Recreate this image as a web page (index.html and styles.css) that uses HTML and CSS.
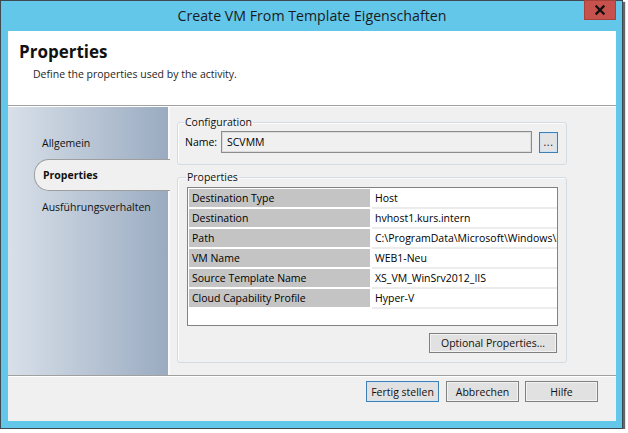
FILE: index.html
```html
<!DOCTYPE html>
<html lang="de">
<head>
<meta charset="utf-8">
<title>Create VM From Template Eigenschaften</title>
<link rel="stylesheet" href="styles.css">
</head>
<body>
<div class="window">
  <div class="titlebar">
    <span class="tb-spacer"></span>
    <div class="title">Create VM From Template Eigenschaften</div>
    <div class="close" aria-label="Schließen">
      <svg width="32" height="20" viewBox="0 0 32 20"><path d="M12.5 6.5 L19.5 13.5 M19.5 6.5 L12.5 13.5" stroke="#111" stroke-width="2.3" stroke-linecap="square"/></svg>
    </div>
  </div>
  <div class="client">
    <header class="header">
      <h1 class="h-title">Properties</h1>
      <p class="h-desc">Define the properties used by the activity.</p>
    </header>
    <div class="main">
      <nav class="sidebar">
        <div class="nav-item">Allgemein</div>
        <div class="nav-item active">Properties</div>
        <div class="nav-item">Ausführungsverhalten</div>
      </nav>
      <div class="content">
        <fieldset class="group group-config">
          <legend>Configuration</legend>
          <div class="name-row">
            <span class="name-label">Name:</span>
            <div class="textbox">SCVMM</div>
            <button class="btn btn-dots">...</button>
          </div>
        </fieldset>
        <fieldset class="group group-props">
          <legend>Properties</legend>
          <div class="pgrid">
            <div class="prow"><div class="pname">Destination Type</div><div class="pval">Host</div></div>
            <div class="prow"><div class="pname">Destination</div><div class="pval">hvhost1.kurs.intern</div></div>
            <div class="prow"><div class="pname">Path</div><div class="pval">C:\ProgramData\Microsoft\Windows\Hyper-V</div></div>
            <div class="prow"><div class="pname">VM Name</div><div class="pval">WEB1-Neu</div></div>
            <div class="prow"><div class="pname">Source Template Name</div><div class="pval">XS_VM_WinSrv2012_IIS</div></div>
            <div class="prow"><div class="pname">Cloud Capability Profile</div><div class="pval">Hyper-V</div></div>
          </div>
          <div class="opt-row"><button class="btn btn-opt">Optional Properties...</button></div>
        </fieldset>
      </div>
    </div>
    <footer class="footer">
      <button class="btn btn-foot btn-default">Fertig stellen</button>
      <button class="btn btn-foot">Abbrechen</button>
      <button class="btn btn-foot">Hilfe</button>
    </footer>
  </div>
</div>
</body>
</html>
```
FILE: styles.css
```css
html, body {
  margin: 0;
  background: #ffffff;
}
body {
  font-family: "Open Sans", "Noto Sans", sans-serif;
  font-size: 10.5px;
  color: #000;
}
.window {
  width: 623px;
  height: 429px;
  box-sizing: border-box;
  border: 1px solid #3e4a52;
  background: #63c7ea;
  padding: 0 6px 7px 7px;
  box-shadow: 2px 2px 1px rgba(0, 0, 0, 0.6);
  display: flex;
  flex-direction: column;
}
.titlebar {
  height: 30px;
  display: grid;
  grid-template-columns: 1fr auto 1fr;
  align-items: center;
}
.title {
  font-size: 14.2px;
  color: #1b1b1b;
  line-height: 30px;
  white-space: nowrap;
}
.close {
  justify-self: end;
  align-self: start;
  width: 32px;
  height: 20px;
  margin-top: -1px;
  background: #c7514c;
  box-sizing: border-box;
  box-shadow: inset 0 0 0 1px #a8403b;
}
.close svg { display: block; }
.client {
  height: 390px;
  background: #f0f0f0;
  display: flex;
  flex-direction: column;
}
.header {
  height: 75px;
  box-sizing: border-box;
  background: #fff;
  border-bottom: 1px solid #a0a0a0;
  padding: 10px 0 0 11px;
}
.h-title {
  margin: 0;
  font-size: 17px;
  font-weight: 700;
  line-height: 22px;
  color: #111;
}
.h-desc {
  margin: 5px 0 0 14px;
  line-height: 12px;
  color: #1e1e1e;
}
.main {
  height: 269px;
  box-sizing: border-box;
  border-top: 1px solid #fff;
  display: flex;
}
.sidebar {
  width: 162px;
  box-sizing: border-box;
  border-right: 2px solid #f9f9f9;
  background: linear-gradient(to right, #d8e0e9, #9aabc1);
  padding-top: 20px;
  display: flex;
  flex-direction: column;
}
.nav-item {
  height: 32px;
  box-sizing: border-box;
  margin-left: 26px;
  padding-left: 7px;
  border: 1px solid transparent;
  border-right: 0;
  display: flex;
  align-items: center;
  color: #111;
}
.nav-item.active {
  background: #f0f0f0;
  border-color: #9e9e9e;
  border-radius: 15px 0 0 15px;
  margin-right: -2px;
  font-weight: 700;
  padding-left: 8px;
}
.content {
  flex: 1;
  padding: 9px 0 0 7px;
}
.group {
  width: 390px;
  box-sizing: border-box;
  margin: 0;
  border: 1px solid #d3dce2;
  border-radius: 3px;
  box-shadow: inset 1px 1px 0 #fbfbfb;
  padding: 2px 8px 11px 7px;
  min-width: 0;
}
.group legend {
  padding: 0 1px;
  margin-left: -1px;
  line-height: 13px;
  color: #111;
}
.group-props {
  margin-top: 6px;
  padding: 3px 8px 9px 9px;
}
.name-row {
  display: flex;
  align-items: center;
  height: 22px;
}
.name-label {
  width: 36px;
  flex: none;
}
.textbox {
  flex: 1;
  height: 22px;
  box-sizing: border-box;
  border: 1px solid #8c8c8c;
  box-shadow: inset 0 0 0 1px #dcdcdc;
  background: #f0f0f0;
  padding-left: 5px;
  line-height: 20px;
  margin-right: 7px;
}
.btn {
  font-family: inherit;
  font-size: 10.5px;
  color: #111;
  background: #e1e1e1;
  border: 1px solid #808080;
  box-shadow: inset 0 0 0 1px #f3f3f3;
  padding: 0;
  margin: 0;
  box-sizing: border-box;
}
.btn-dots {
  width: 19px;
  height: 21px;
  border-color: #3f80b4;
  box-shadow: inset 0 0 0 1px #cfe2f3;
  background: #e3e3e3;
  line-height: 14px;
  letter-spacing: 0.5px;
}
.pgrid {
  height: 139px;
  box-sizing: border-box;
  border: 1px solid #828282;
  background: #fff;
  padding: 1px 0 0 1px;
  overflow: hidden;
}
.prow {
  display: grid;
  grid-template-columns: 181px 1fr;
  column-gap: 2px;
  height: 20px;
}
.pname {
  height: 18px;
  background: #c4c4c4;
  padding-left: 3px;
  line-height: 18px;
  white-space: nowrap;
}
.pval {
  height: 20px;
  box-sizing: border-box;
  border-bottom: 2px solid #ececec;
  padding-left: 3px;
  line-height: 18px;
  white-space: nowrap;
  overflow: hidden;
}
.opt-row {
  display: flex;
  justify-content: flex-end;
  margin-top: 7px;
  padding-right: 1px;
}
.btn-opt {
  width: 128px;
  height: 20px;
}
.footer {
  flex: 1;
  border-top: 1px solid #a0a0a0;
  box-shadow: inset 0 1px 0 #fff;
  padding: 5px 18px 0 0;
  display: flex;
  justify-content: flex-end;
  align-items: flex-start;
  gap: 6px;
}
.btn-foot {
  width: 73px;
  height: 21px;
}
.btn-default {
  border-color: #3f80b4;
  box-shadow: inset 0 0 0 1px #d3e5f5;
  margin-right: 1px;
}
```
